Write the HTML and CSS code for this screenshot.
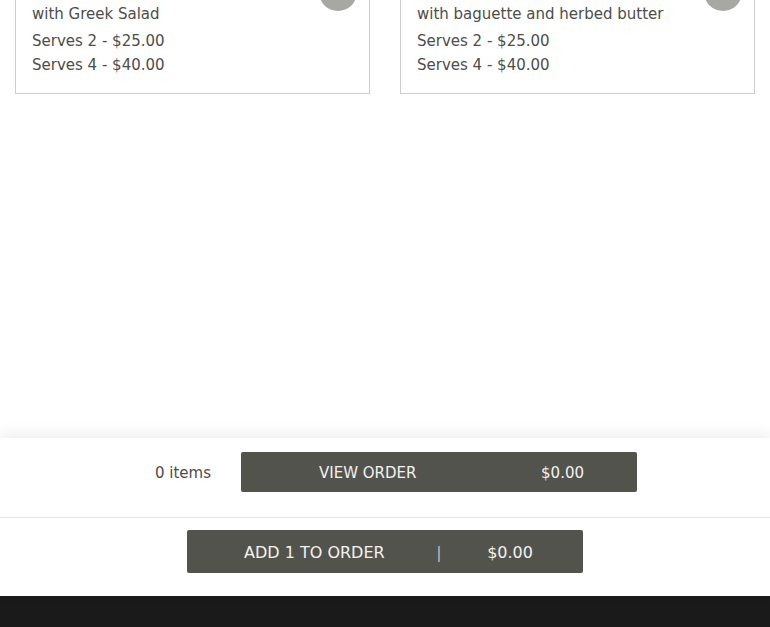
FILE: index.html
```html
<!DOCTYPE html>
<html lang="en">
<head>
<meta charset="utf-8">
<title>Order</title>
<link rel="stylesheet" href="styles.css">
</head>
<body>
<main class="menu">
  <div class="cards">
    <article class="card">
      <button class="add-circle" aria-label="Add"></button>
      <p class="desc">with Greek Salad</p>
      <p class="price">Serves 2 - $25.00</p>
      <p class="price">Serves 4 - $40.00</p>
    </article>
    <article class="card">
      <button class="add-circle" aria-label="Add"></button>
      <p class="desc">with baguette and herbed butter</p>
      <p class="price">Serves 2 - $25.00</p>
      <p class="price">Serves 4 - $40.00</p>
    </article>
  </div>
</main>
<section class="order-panel">
  <div class="summary-row">
    <span class="items">0 items</span>
    <button class="view-btn"><span>VIEW ORDER</span><span>$0.00</span></button>
  </div>
  <div class="add-row">
    <button class="add-btn"><span class="add-label">ADD 1 TO ORDER</span><span class="sep">|</span><span class="add-total">$0.00</span></button>
  </div>
</section>
<footer class="footer"></footer>
</body>
</html>
```
FILE: styles.css
```css
* { box-sizing: border-box; }
html, body { margin: 0; padding: 0; }
body {
  height: 627px;
  overflow: hidden;
  display: flex;
  flex-direction: column;
  font-family: "DejaVu Sans", "Open Sans", sans-serif;
  color: #4d4d4b;
  background: #fff;
}
.menu { flex: 1; }
.cards {
  display: grid;
  grid-template-columns: 355px 355px;
  gap: 30px;
  padding: 0 15px;
  margin-top: -40px;
}
.card {
  position: relative;
  border: 1px solid #cdcdcd;
  padding: 41px 16px 16px;
}
.card p { margin: 0; font-size: 15px; line-height: 24px; }
.card .desc { margin-bottom: 3px; }
.add-circle {
  position: absolute;
  top: 12px;
  right: 12px;
  width: 38px;
  height: 38px;
  border-radius: 50%;
  border: none;
  padding: 0;
  background: #a7a7a4;
}
.order-panel {
  background: #fff;
  box-shadow: 0 -4px 14px rgba(0,0,0,0.07);
  position: relative;
}
.summary-row {
  display: flex;
  justify-content: center;
  align-items: center;
  padding: 14px 0 25px;
  border-bottom: 1px solid #e2e2e2;
}
.items {
  width: 78px;
  margin-right: 30px;
  padding-top: 2px;
  text-align: right;
  font-size: 15px;
}
button { font-family: inherit; cursor: pointer; }
.view-btn, .add-btn {
  width: 396px;
  border: none;
  border-radius: 2px;
  background: #53534e;
  color: #f2f2ef;
  display: flex;
  align-items: center;
  justify-content: space-between;
  font-size: 15px;
}
.view-btn { height: 40px; padding: 2px 53px 0 78px; }
.add-row {
  display: flex;
  justify-content: center;
  padding: 12px 0 23px;
}
.add-btn { height: 43px; padding: 2px 50px 0 57px; font-size: 16px; }
.sep { color: #bdbdb8; padding-left: 6px; }
.footer { height: 31px; background: #1a1a1a; flex: none; }
```
